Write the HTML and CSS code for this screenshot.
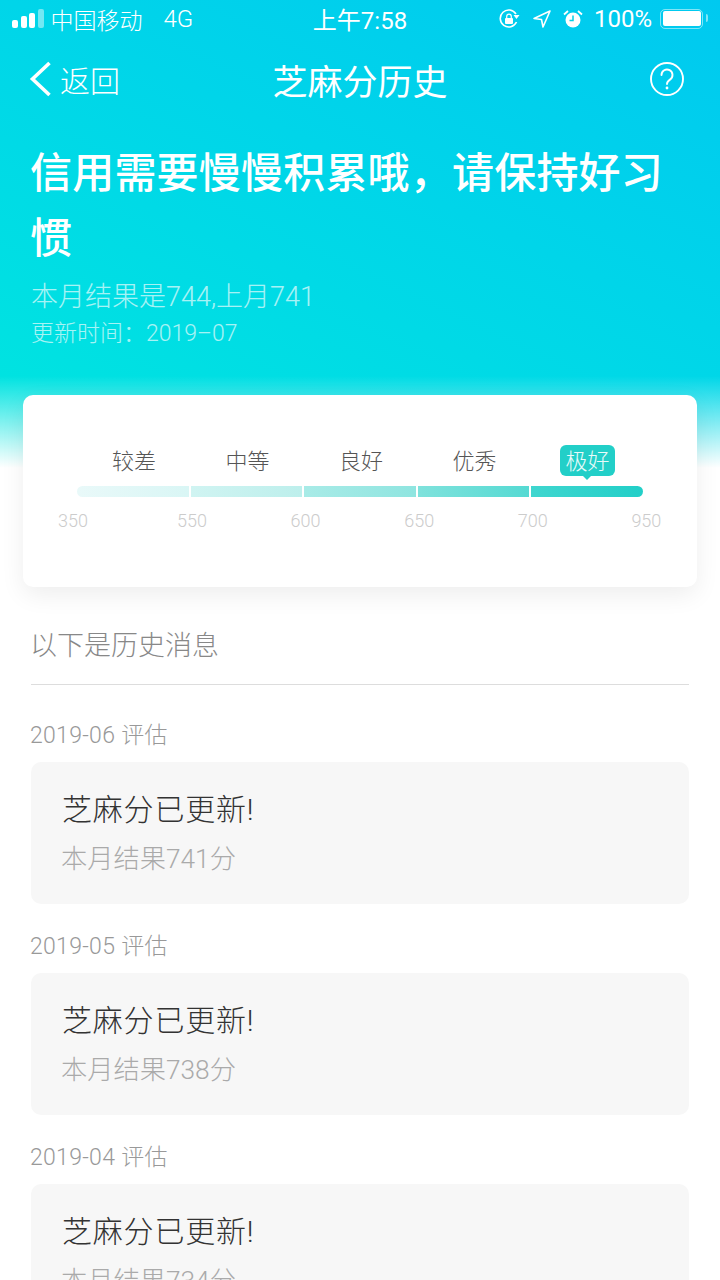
FILE: index.html
```html
<!DOCTYPE HTML>
<html>
<head>
	<meta http-equiv="Content-Type" content="text/html; charset=utf-8">
	<title>芝麻分历史</title>
	<link rel="stylesheet" href="styles.css">
</head>
<body>
<div class="page">
	<div class="hero">
		<div class="status">
			<div class="status-left">
				<span class="signal"><i></i><i></i><i></i><i class="off"></i></span>
				<span>中国移动</span>
				<span class="net">4G</span>
			</div>
			<div class="status-time">上午7:58</div>
			<div class="status-right">
				<svg class="lock" width="22" height="22" viewBox="0 0 22 22" fill="none" stroke="#fff" stroke-width="1.6"><path d="M18.500 14A8.500 8.500 0 1 1 18 6"/><path d="M15.500 7h6L18.500 11z" fill="#fff" stroke="none"/><rect x="7" y="10" width="8" height="6" rx="1" fill="#fff" stroke="none"/><path d="M8.700 10V8.500a2.300 2.300 0 0 1 4.600 0V10" stroke-width="1.200"/></svg>
				<svg width="20" height="20" viewBox="0 0 20 20" fill="none" stroke="#fff" stroke-width="1.600"><path d="M18 2 2 9.500l7.500 1 1.500 7.500z" stroke-linejoin="round"/></svg>
				<svg width="22" height="22" viewBox="0 0 22 22"><circle cx="11" cy="12" r="7.500" fill="#fff"/><path d="M11 7.500V12.500H7.500" fill="none" stroke="#00d0e6" stroke-width="1.500"/><path d="M2 6.500 6 3M20 6.500 16 3" stroke="#fff" stroke-width="1.800"/></svg>
				<span class="pct">100%</span>
				<span class="battery"><b></b></span>
			</div>
		</div>
		<div class="nav">
			<div class="back">
				<svg width="24" height="36" viewBox="0 0 24 36" fill="none" stroke="#fff" stroke-width="3.600"><path d="M21.500 2 4.500 18l17 16"/></svg>
				<span>返回</span>
			</div>
			<div class="nav-title">芝麻分历史</div>
			<svg class="help" width="36" height="36" viewBox="0 0 36 36" fill="none" stroke="#fff" stroke-width="1.900"><circle cx="18" cy="18" r="16"/><path d="M12.500 14a5.500 5.500 0 1 1 8.500 4.600c-2 1.300-3 2.200-3 4.400" stroke-linecap="round"/><circle cx="18" cy="27" r="1.400" fill="#fff" stroke="none"/></svg>
		</div>
		<h1 class="headline">信用需要慢慢积累哦，请保持好习惯</h1>
		<div class="sub">本月结果是744,上月741</div>
		<div class="updated">更新时间：2019–07</div>
	</div>

	<div class="card">
		<div class="levels">
			<span>较差</span>
			<span>中等</span>
			<span>良好</span>
			<span>优秀</span>
			<span class="active"><em>极好</em></span>
		</div>
		<div class="bar">
			<i class="s1"></i><i class="s2"></i><i class="s3"></i><i class="s4"></i><i class="s5"></i>
		</div>
		<div class="scale">
			<span>350</span><span>550</span><span>600</span><span>650</span><span>700</span><span>950</span>
		</div>
	</div>

	<div class="history">
		<div class="history-title">以下是历史消息</div>

		<div class="month">2019-06 评估</div>
		<div class="msg">
			<div class="msg-title">芝麻分已更新!</div>
			<div class="msg-text">本月结果741分</div>
		</div>

		<div class="month">2019-05 评估</div>
		<div class="msg">
			<div class="msg-title">芝麻分已更新!</div>
			<div class="msg-text">本月结果738分</div>
		</div>

		<div class="month">2019-04 评估</div>
		<div class="msg">
			<div class="msg-title">芝麻分已更新!</div>
			<div class="msg-text">本月结果734分</div>
		</div>
	</div>
</div>
</body>
</html>
```

FILE: styles.css
```css
html, body {
	margin: 0;
	padding: 0;
	background: #fff;
}
body {
	font-family: Roboto, "Noto Sans CJK SC", "Liberation Sans", sans-serif;
	font-weight: 300;
	color: #333;
}
.page {
	width: 720px;
	height: 1280px;
	overflow: hidden;
}

.hero {
	height: 470px;
	box-sizing: border-box;
	color: #fff;
	background:
		linear-gradient(to bottom, rgba(255,255,255,0) 376px, #fff 468px),
		linear-gradient(205deg, #00c9f0 0%, #00e6df 100%);
}

.status {
	height: 37px;
	padding: 0 17px 3px 12px;
	display: flex;
	align-items: center;
	justify-content: space-between;
	font-size: 23px;
	position: relative;
}
.status-left, .status-right {
	display: flex;
	align-items: center;
}
.signal {
	display: flex;
	align-items: flex-end;
	gap: 2.500px;
	margin-right: 7px;
}
.signal i {
	width: 6px;
	background: #fff;
	border-radius: 2px;
	height: 8px;
}
.signal i:nth-child(2) { height: 12px; }
.signal i:nth-child(3) { height: 15px; }
.signal i:nth-child(4) { height: 19px; }
.signal .off { background: rgba(255,255,255,.45); }
.net {
	margin-left: 21px;
	font-size: 24px;
}
.status-time {
	position: absolute;
	left: 0;
	right: 0;
	text-align: center;
	font-weight: 400;
	font-size: 24px;
}
.status-right { gap: 10px; }
.lock { margin-right: 2px; }
.pct {
	font-size: 24px;
	font-weight: 400;
}
.battery {
	width: 43px;
	height: 20px;
	box-sizing: border-box;
	border: 1.500px solid rgba(255,255,255,.5);
	border-radius: 5px;
	padding: 1.500px;
	margin-left: -2px;
	display: block;
	position: relative;
}
.battery::after {
	content: "";
	position: absolute;
	right: -6px;
	top: 4px;
	width: 2px;
	height: 8px;
	background: rgba(255,255,255,.5);
	border-radius: 0 2px 2px 0;
}
.battery b {
	display: block;
	height: 100%;
	background: #fff;
	border-radius: 2px;
}

.nav {
	height: 78px;
	padding: 0 35px 2px 28px;
	display: flex;
	align-items: center;
	justify-content: space-between;
	position: relative;
}
.back {
	display: flex;
	align-items: center;
	gap: 8px;
	font-size: 30px;
}
.nav-title {
	position: absolute;
	left: 0;
	right: 0;
	text-align: center;
	font-size: 35px;
	font-weight: 400;
}

.headline {
	margin: 21px 0 0;
	padding: 0 30px;
	font-size: 42px;
	line-height: 65px;
	font-weight: 500;
	letter-spacing: 0.200px;
}
.sub {
	margin-top: 6px;
	padding: 0 31px;
	font-size: 27px;
	line-height: 40px;
	opacity: .65;
}
.updated {
	padding: 0 31px;
	font-size: 23px;
	line-height: 34px;
	opacity: .65;
}

.card {
	margin: -75px 23px 0;
	height: 192px;
	box-sizing: border-box;
	padding-top: 50px;
	background: #fff;
	border-radius: 10px;
	box-shadow: 0 8px 24px rgba(0,0,0,.07);
	position: relative;
}
.levels {
	display: flex;
	padding-left: 54px;
	height: 31px;
	font-size: 22px;
	color: #555;
}
.levels span {
	width: 113.500px;
	padding-left: 35px;
	box-sizing: border-box;
	line-height: 34px;
}
.levels .active {
	position: relative;
}
.levels .active em {
	position: absolute;
	left: 29px;
	top: 0;
	width: 55px;
	height: 31px;
	background: #22cfc8;
	border-radius: 6px;
	color: #e8fbfa;
	font-style: normal;
	text-align: center;
}
.levels .active::after {
	content: "";
	position: absolute;
	left: 51px;
	top: 30px;
	border: 5px solid transparent;
	border-top-color: #22cfc8;
}
.bar {
	margin: 10px 54px 0;
	height: 11px;
	display: flex;
	gap: 2px;
	border-radius: 6px;
	overflow: hidden;
}
.bar i { flex: 1; }
.s1 { background: linear-gradient(to right, #e9f9f9, #d9f6f5); }
.s2 { background: linear-gradient(to right, #d0f4f2, #bdefec); }
.s3 { background: linear-gradient(to right, #a8ebe7, #8fe5e0); }
.s4 { background: linear-gradient(to right, #7fe2dc, #55dad3); }
.s5 { background: linear-gradient(to right, #3fd6cf, #22cfc8); }
.scale {
	margin-top: 13px;
	display: flex;
	gap: 13.600px;
	font-size: 18px;
	color: #ccc;
}
.scale span {
	width: 100px;
	flex: none;
	text-align: center;
}
.scale span:first-child {
	margin-right: 5.400px;
}

.history {
	padding: 0 31px;
}
.history-title {
	margin-top: 38px;
	height: 59px;
	line-height: 42px;
	text-indent: -1px;
	font-size: 27px;
	color: #888;
	border-bottom: 1px solid #ddd;
}
.month {
	margin-top: 30px;
	line-height: 42px;
	text-indent: -1px;
	letter-spacing: 0.300px;
	font-size: 23px;
	color: #999;
}
.msg {
	margin-top: 5px;
	margin-bottom: 22px;
	height: 142px;
	box-sizing: border-box;
	padding: 28px 31px 0;
	background: #f7f7f7;
	border-radius: 10px;
}
.msg + .month { margin-top: 0; }
.msg-title {
	font-size: 30px;
	line-height: 40px;
	letter-spacing: 0.800px;
	color: #333;
}
.msg-text {
	margin-top: 10px;
	margin-left: -1px;
	font-size: 26.250px;
	line-height: 38px;
	color: #aaa;
}
```
